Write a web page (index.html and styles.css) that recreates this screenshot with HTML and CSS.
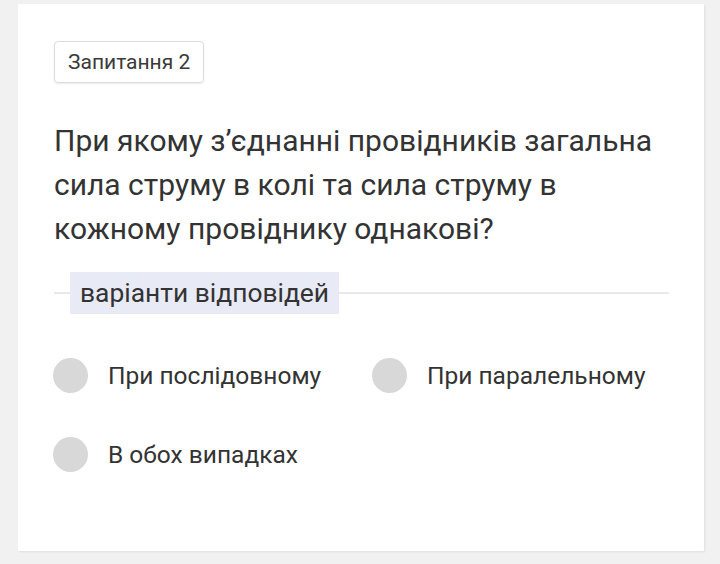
FILE: index.html
```html
<!DOCTYPE html>
<html lang="uk">
<head>
<meta charset="utf-8">
<link rel="stylesheet" href="styles.css">
</head>
<body>
<div class="card">
  <div class="tag">Запитання 2</div>
  <div class="question">При якому з’єднанні провідників загальна сила струму в колі та сила струму в кожному провіднику однакові?</div>
  <div class="divider"><span class="label">варіанти відповідей</span></div>
  <div class="options">
    <div class="option"><span class="radio"></span><span class="otext">При послідовному</span></div>
    <div class="option"><span class="radio"></span><span class="otext">При паралельному</span></div>
    <div class="option"><span class="radio"></span><span class="otext">В обох випадках</span></div>
  </div>
</div>
</body>
</html>
```
FILE: styles.css
```css
html, body {
  margin: 0;
  padding: 0;
  background: #f1f1f1;
  font-family: Roboto, "Noto Sans", sans-serif;
  color: #333;
}
body {
  padding: 4px 16px 0 18px;
  width: 720px;
  height: 564px;
  box-sizing: border-box;
}
.card {
  background: #fff;
  width: 686px;
  height: 547px;
  box-sizing: border-box;
  padding: 37px 35px 0 36px;
  box-shadow: 1px 1px 2px rgba(0,0,0,0.08);
}
.tag {
  display: inline-block;
  border: 1px solid #dcdcdc;
  border-radius: 4px;
  padding: 0 13px;
  height: 42px;
  line-height: 40px;
  box-sizing: border-box;
  font-size: 21px;
  color: #3a3a3a;
  box-shadow: 0 1px 2px rgba(0,0,0,0.08);
}
.question {
  margin-top: 36px;
  font-size: 30px;
  line-height: 44px;
  color: #333;
  padding-right: 10px;
}
.divider {
  margin-top: 21px;
  height: 42px;
  display: flex;
  align-items: center;
  padding-left: 16px;
  background: linear-gradient(#e9e9e9, #e9e9e9) no-repeat 0 50% / 100% 2px;
}
.label {
  background: #e8eaf6;
  height: 42px;
  line-height: 42px;
  padding: 0 10px;
  font-size: 26.4px;
  color: #333;
}
.options {
  margin-top: 44px;
  display: grid;
  grid-template-columns: 319px auto;
  row-gap: 44px;
}
.option {
  display: flex;
  align-items: center;
  height: 35px;
}
.radio {
  width: 35px;
  height: 35px;
  border-radius: 50%;
  background: #d8d8d8;
  flex: none;
  margin-left: -1px;
}
.otext {
  margin-left: 20px;
  font-size: 24.5px;
  color: #333;
}
```
